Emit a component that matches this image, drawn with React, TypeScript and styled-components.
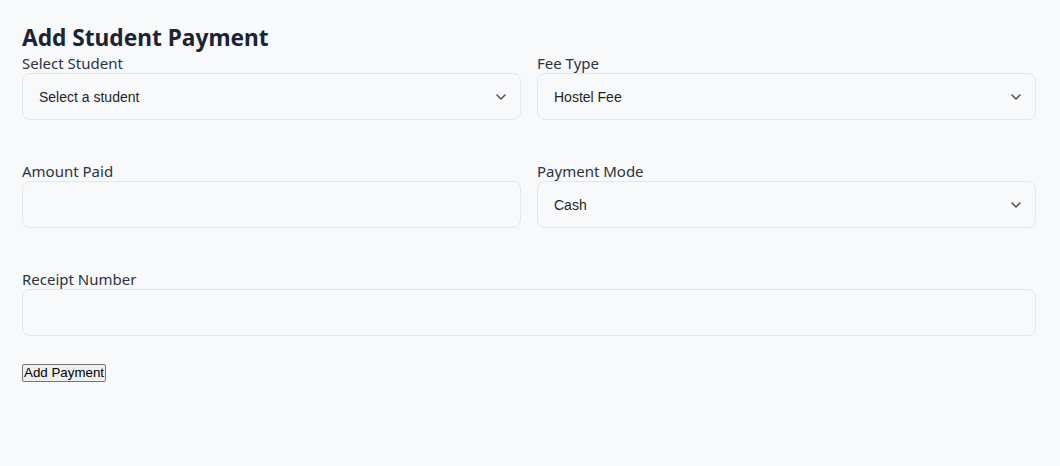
import React from "react";
import styled, { createGlobalStyle } from "styled-components";

const Global = createGlobalStyle`
  html, body { margin: 0; padding: 0; background: #f8f9fb; }
  body { font-family: "Noto Sans", "Open Sans", sans-serif; }
`;

const Page = styled.div`
  padding: 22px 24px 40px 22px;
  min-height: 466px;
  box-sizing: border-box;
  background: #f8f9fb;
`;

const Title = styled.h2`
  margin: 0;
  font-size: 22.7px;
  line-height: 31px;
  font-weight: 700;
  color: #1b2433;
`;

const Grid = styled.div`
  display: grid;
  grid-template-columns: 1fr 1fr;
  column-gap: 16px;
  row-gap: 41px;
`;

const Field = styled.div<{ $full?: boolean }>`
  display: flex;
  flex-direction: column;
  grid-column: ${(p) => (p.$full ? "1 / -1" : "auto")};
`;

const Label = styled.label`
  font-size: 15px;
  line-height: 20px;
  color: #2a3342;
`;

const Control = styled.div`
  position: relative;
  height: 47px;
  box-sizing: border-box;
  border: 1px solid #e3e6ea;
  border-radius: 8px;
  background: #f8f9fb;
  display: flex;
  align-items: center;
  padding: 0 16px;
  font-family: "Liberation Sans", Arial, sans-serif;
  font-size: 14px;
  color: #1f1f1f;
`;

const Value = styled.span`
  flex: 1;
`;

const Chevron = styled.svg`
  width: 12px;
  height: 12px;
  margin-right: -3px;
`;

const Button = styled.button`
  margin-top: 28px;
  font-family: "Liberation Sans", Arial, sans-serif;
  font-size: 13.33px;
  padding: 1px 1px;
  background: #efefef;
  border: 1px solid #767676;
  border-radius: 2px;
  color: #000;
  line-height: 14px;
`;

const Select = ({ value }: { value: string }) => (
  <Control>
    <Value>{value}</Value>
    <Chevron viewBox="0 0 12 12">
      <path d="M2 4 L6 8 L10 4" fill="none" stroke="#555" strokeWidth="1.6" strokeLinecap="round" strokeLinejoin="round" />
    </Chevron>
  </Control>
);

export default function App() {
  return (
    <>
      <Global />
      <Page>
        <Title>Add Student Payment</Title>
        <Grid>
          <Field>
            <Label>Select Student</Label>
            <Select value="Select a student" />
          </Field>
          <Field>
            <Label>Fee Type</Label>
            <Select value="Hostel Fee" />
          </Field>
          <Field>
            <Label>Amount Paid</Label>
            <Control />
          </Field>
          <Field>
            <Label>Payment Mode</Label>
            <Select value="Cash" />
          </Field>
          <Field $full>
            <Label>Receipt Number</Label>
            <Control />
          </Field>
        </Grid>
        <Button>Add Payment</Button>
      </Page>
    </>
  );
}
